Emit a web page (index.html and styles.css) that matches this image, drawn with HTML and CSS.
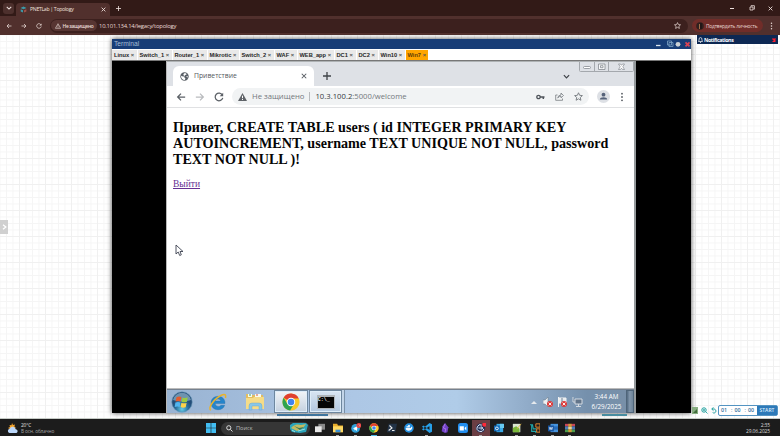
FILE: index.html
```html
<!DOCTYPE html>
<html lang="ru">
<head>
<meta charset="utf-8">
<title>PNETLab | Topology</title>
<link rel="stylesheet" href="styles.css">
</head>
<body>
<svg class="defs" width="0" height="0">
  <symbol id="back" viewBox="0 0 12 12"><path d="M11 6H2M6 2L2 6l4 4" fill="none" stroke="currentColor" stroke-width="1.5"/></symbol>
  <symbol id="reload" viewBox="0 0 12 12"><path d="M10 3.6A4.6 4.6 0 1 0 10.5 7" fill="none" stroke="currentColor" stroke-width="1.5"/><path d="M11 .8V5H6.8z" fill="currentColor"/></symbol>
  <symbol id="close" viewBox="0 0 8 8"><path d="M1 1l6 6M7 1L1 7" fill="none" stroke="currentColor" stroke-width="1.4"/></symbol>
  <symbol id="plus" viewBox="0 0 8 8"><path d="M4 0v8M0 4h8" fill="none" stroke="currentColor" stroke-width="1.3"/></symbol>
  <symbol id="down" viewBox="0 0 8 8"><path d="M1 2.5l3 3 3-3" fill="none" stroke="currentColor" stroke-width="1.4"/></symbol>
  <symbol id="star" viewBox="0 0 12 12"><path d="M6 1l1.5 3.4 3.7.4-2.8 2.5.8 3.7L6 9.1 2.8 11l.8-3.7L.8 4.8l3.7-.4z" fill="none" stroke="currentColor" stroke-width="1.2"/></symbol>
  <symbol id="dots" viewBox="0 0 4 12"><circle cx="2" cy="2" r="1.1" fill="currentColor"/><circle cx="2" cy="6" r="1.1" fill="currentColor"/><circle cx="2" cy="10" r="1.1" fill="currentColor"/></symbol>
  <symbol id="chrome" viewBox="0 0 20 20"><circle cx="10" cy="10" r="9.5" fill="#f8c829"/><path d="M10 10L1.8 5.3A9.5 9.5 0 0 1 18.500 6H10z" fill="#e0402f"/><path d="M1.8 5.3A9.500 9.500 0 0 0 9 19.500l4.300-7.200L10 10 6 12z" fill="#2fa350"/><circle cx="10" cy="10" r="4.700" fill="#fff"/><circle cx="10" cy="10" r="3.600" fill="#4284ec"/></symbol>
  <symbol id="bad" viewBox="0 0 6 6"><circle cx="3" cy="3" r="3" fill="#dc3b3b"/><path d="M1.6 1.6l2.8 2.8M4.4 1.6L1.6 4.4" stroke="#fff" stroke-width=".9"/></symbol>
</svg>

<header class="host-tabs">
  <span class="tab-search"><svg width="6" height="6"><use href="#down"/></svg></span>
  <div class="host-tab">
    <svg class="favicon" width="7" height="7" viewBox="0 0 7 7"><path d="M.5 2L3.5.5l3 1.500-3 1.300zM.7 3.200l2.300 1v2.400L.7 5.400z" fill="#3c9aaa"/><path d="M4 4.200l2.400-1v2.200L4 6.600z" fill="#9f5148"/></svg>
    <span class="host-title">PNETLab | Topology</span>
    <svg width="5" height="5"><use href="#close"/></svg>
  </div>
  <svg class="new-tab" width="5" height="5"><use href="#plus"/></svg>
  <div class="win-controls">
    <svg width="6" height="6" viewBox="0 0 6 6"><path d="M1 3.500h4" stroke="currentColor"/></svg>
    <svg width="6" height="6" viewBox="0 0 6 6"><path d="M1 2h3v3H1zM2 1.500V.7h3.400v3.500H4.500" fill="none" stroke="currentColor" stroke-width=".8"/></svg>
    <svg width="5" height="5"><use href="#close"/></svg>
  </div>
</header>
<div class="host-bar">
  <svg width="6" height="6"><use href="#back"/></svg>
  <svg class="flip" width="6" height="6"><use href="#back"/></svg>
  <svg width="6" height="6"><use href="#reload"/></svg>
  <div class="host-address">
    <span class="insecure"><svg width="6" height="6" viewBox="0 0 6 6"><path d="M3 .7L5.600 5.300H.4zM3 2.200v1.500M3 4.200v.6" fill="none" stroke="currentColor" stroke-width=".6"/></svg>Не защищено</span>
    <span class="host-url">10.101.134.14/legacy/topology</span>
    <svg class="fav" width="7" height="7"><use href="#star"/></svg>
  </div>
  <div class="identity"><svg width="8" height="8" viewBox="0 0 8 8"><circle cx="4" cy="4" r="3.800" fill="#31201e"/><path d="M3 2h2v5H3z" fill="#a36d48"/><path d="M4 1h2v6H4z" fill="#221717"/></svg><span>Подтвердить личность</span></div>
  <svg class="host-menu" width="3" height="8"><use href="#dots"/></svg>
</div>

<main class="lab">
  <button class="drawer"><svg width="5" height="6" viewBox="0 0 5 6"><path d="M1 .8L3.800 3 1 5.200" fill="none" stroke="#fff" stroke-width="1.300"/></svg></button>
  <aside class="notifications">
    <svg width="5" height="6" viewBox="0 0 5 6"><path d="M.5 4.500L1.100 3V2a1.400 1.400 0 0 1 2.800 0v1l.6 1.500zM2 5.500h1" fill="none" stroke="#fff" stroke-width=".7"/></svg>
    <b>Notifications</b><svg class="notif-close" width="4" height="4" viewBox="0 0 4 4"><path d="M.5.5l3 3M3.500.5l-3 3" stroke="currentColor" stroke-width="1.500"/></svg>
  </aside>

  <section class="terminal">
    <div class="term-title"><span>Terminal</span>
      <div class="term-controls">
        <svg width="35" height="8" viewBox="0 0 35 8"><path d="M0 5.500h4.500" stroke="#dce6ee" stroke-width="1.300"/><path d="M11.500 1h4v4h-4zM13 2.500h4v4h-4z" fill="none" stroke="#7da3c4" stroke-width=".8"/><circle cx="22" cy="4.300" r="2.400" fill="#cbd1d5"/><path d="M29.500 2.300l4 4M33.500 2.300l-4 4" stroke="#d84455" stroke-width="1.700"/></svg>
      </div>
    </div>
    <nav class="term-tabs">
      <span class="w1">Linux <i>×</i></span><span class="w2">Switch_1 <i>×</i></span><span class="w3">Router_1 <i>×</i></span><span class="w4">Mikrotic <i>×</i></span><span class="w5">Switch_2 <i>×</i></span><span class="w6">WAF <i>×</i></span><span class="w7">WEB_app <i>×</i></span><span class="w8">DC1 <i>×</i></span><span class="w9">DC2 <i>×</i></span><span class="w10">Win10 <i>×</i></span><span class="w11 active">Win7 <i>×</i></span>
    </nav>
    <div class="term-body">
      <div class="vm">
        <div class="vm-tabs">
          <div class="vm-tab">
            <svg width="9" height="9" viewBox="0 0 9 9"><circle cx="4.500" cy="4.500" r="4.200" fill="#5a6067"/><path d="M1 3.700l2 .9 1.500 0v1.200l1 .7-.8 1.500C2.600 7.800.9 6.200 1 3.700zM4 1.200l2 .1.600 1.100-1.400.7L4.600 4 3.300 3.100zM6 4.600l1.800-.5-.2 1.500z" fill="#fff"/></svg>
            <span>Приветствие</span>
            <svg class="vm-close" width="6" height="6"><use href="#close"/></svg>
          </div>
          <svg class="vm-new" width="8" height="8"><use href="#plus"/></svg>
          <svg class="vm-down" width="7" height="7"><use href="#down"/></svg>
          <div class="aero">
            <svg width="55" height="10" viewBox="0 0 55 10"><path d="M.5 0v8.500q0 1 1 1h52q1 0 1-1V0M15.500 0v9.500M29.500 0v9.500" fill="none" stroke="#a4a8ad" stroke-width="1"/><rect x="4.500" y="4.500" width="7" height="2" rx="1" fill="#fff" stroke="#858a90" stroke-width=".8"/><path d="M19.500 2h6.500v5.500h-6.500zM21.500 3.700h2.500v2h-2.500z" fill="#f7f8f9" stroke="#858a90" stroke-width=".8"/><path d="M39.500 2h2l1 1.300 1-1.300h2l-1.700 2.700L45.500 7.500h-2l-1-1.300-1 1.300h-2l1.700-2.800z" fill="#fff" stroke="#858a90" stroke-width=".7"/></svg>
          </div>
        </div>
        <div class="vm-bar">
          <svg width="10" height="10"><use href="#back"/></svg>
          <svg class="flip dim" width="10" height="10"><use href="#back"/></svg>
          <svg width="10" height="10"><use href="#reload"/></svg>
          <div class="omnibox">
            <svg width="9" height="8" viewBox="0 0 9 8"><path d="M4.500 0L9 8H0z" fill="#5f6368"/><path d="M4.500 2.700v2.500M4.500 6v1" stroke="#fff"/></svg>
            <span class="state">Не защищено</span><span class="sep"></span>
            <span class="vm-url"><b>10.3.100.2</b>:5000/welcome</span>
            <div class="omni-icons">
              <svg width="9" height="6" viewBox="0 0 9 6"><circle cx="2.500" cy="3" r="1.700" fill="none" stroke="#4f545a" stroke-width="1.300"/><path d="M4 3h4.500M7.300 3v2" stroke="#4f545a" stroke-width="1.500"/></svg>
              <svg width="9" height="9" viewBox="0 0 9 9"><path d="M2.500 3H.7v5.300h6.800V6.500M2.700 6q.5-3 3.300-3V1l2.500 2.500L6 5.800V4.200Q4 4.200 2.700 6z" fill="none" stroke="#777c82" stroke-width=".8"/></svg>
              <svg width="9" height="9"><use href="#star"/></svg>
            </div>
          </div>
          <svg class="profile" width="13" height="13" viewBox="0 0 13 13"><circle cx="6.500" cy="6.500" r="6.500" fill="#dde0e5"/><circle cx="6.500" cy="4.700" r="1.900" fill="#56637a"/><path d="M2.800 9.500c0-3 7.400-3 7.400 0z" fill="#56637a"/></svg>
          <svg class="vm-menu" width="4" height="10"><use href="#dots"/></svg>
        </div>
        <article class="page">
          <h1><span>Привет, CREATE TABLE users ( id INTEGER PRIMARY KEY</span><br><span>AUTOINCREMENT, username TEXT UNIQUE NOT NULL, password</span><br><span>TEXT NOT NULL )!</span></h1>
          <a href="#">Выйти</a>
          <svg class="cursor" width="9" height="13" viewBox="0 0 9 13"><path d="M1 1v9l2.200-2 1.500 3.500 1.600-.7L5 7.500h3z" fill="#fff" stroke="#3c4250" stroke-width=".9"/></svg>
        </article>
        <footer class="aero-bar">
          <svg class="orb" width="22" height="22" viewBox="0 0 22 22"><defs><radialGradient id="orbg" cy=".85"><stop stop-color="#64cce8"/><stop offset=".6" stop-color="#2a6f9c"/><stop offset="1" stop-color="#234d78"/></radialGradient></defs><circle cx="11" cy="11" r="10.300" fill="url(#orbg)" stroke="#719dbd" stroke-width=".6"/><path d="M2 9a9.200 9.200 0 0 1 18 0q-9 3-18 0" fill="#b9d9e6" opacity=".5"/><path d="M5.500 6.300q2.600-1.500 4.900-.2L9.600 10.500Q7.300 9.500 4.600 10.500z" fill="#e45b2e"/><path d="M11.400 6.500q2.200 1 5.300.1l-.9 4.300q-2.700.9-5.200 0z" fill="#9aca42"/><path d="M4.400 11.500q2.600-1 5.100 0L8.700 16q-2.400-1-5 0z" fill="#52b5ef"/><path d="M10.400 11.700q2.400 1.200 5.200.2l-.9 4.400q-2.700.8-5.100-.2z" fill="#ffd249"/></svg>
          <svg class="ie" width="20" height="20" viewBox="0 0 20 20"><path d="M17 11.500H7.200q.4 3 3.100 3 1.900 0 2.600-1.200h3.800Q15.200 17.700 10 17.700C5.800 17.700 3 14.900 3 11S6 4.300 10 4.300s7.200 2.700 7 7.200zM7.200 9h5.600Q12.500 7 10 7T7.200 9" fill="#2585cb" fill-rule="evenodd" stroke="#1a649d" stroke-width=".3"/><path d="M3 18C-1 17 6 6 14.500 2.700q4-1.300 3 3.300" fill="none" stroke="#e8b32d" stroke-width="1.500"/></svg>
          <svg class="explorer" width="20" height="18" viewBox="0 0 20 18"><path d="M1 3V1h5l1 1h11v14H1z" fill="#e2bd60"/><path d="M3 1h4v3H3zM10 1h6v4h-6z" fill="#f6faf0"/><path d="M4 2h2" stroke="#32a765"/><path d="M11 2h2" stroke="#d25745"/><path d="M1 5h7l1-1h10v12H1z" fill="#f5dc88"/><path d="M4 17v-4q0-3 3-3h7q3 0 3 3v4h-3v-4H7v4z" fill="#88c7e8" stroke="#609fc9" stroke-width=".4"/></svg>
          <div class="task chrome-task"><svg width="18" height="18"><use href="#chrome"/></svg></div>
          <div class="task cmd-task"><div class="cmd">C:\_</div></div>
          <span class="stack"></span>
          <div class="tray">
            <svg class="tray-up" width="6" height="4" viewBox="0 0 6 4"><path d="M0 4l3-3 3 3z" fill="#e5e9ed"/></svg>
            <svg width="10" height="12" viewBox="0 0 10 12"><path d="M0 4h2l3-3v10L2 8H0z" fill="#edf0f2" stroke="#657484" stroke-width=".5"/><use href="#bad" x="4" y="5" width="6" height="6"/></svg>
            <svg width="11" height="12" viewBox="0 0 11 12"><path d="M1.500 1v10M2 2h7v5H2z" fill="#e7ebee" stroke="#f2f2f2"/><path d="M5 2v5" stroke="#6e8298"/><use href="#bad" x="4" y="5" width="6" height="6"/></svg>
            <svg width="11" height="12" viewBox="0 0 11 12"><path d="M3 3h7v5H3zM6.500 8v2M4 10.500h5M1 1v5h2" fill="#62758a" stroke="#d3dae2"/></svg>
          </div>
          <div class="vm-clock">3:44 AM<br>6/29/2025</div>
          <div class="peek"></div>
        </footer>
      </div>
    </div>
  </section>
  <span class="sliver left"></span><span class="sliver right"></span>

  <div class="timer">
    <svg width="6" height="7" viewBox="0 0 6 7"><path d="M0 0h6v7H0z" fill="#88ae82"/><path d="M1 6h4V2z" fill="#426d3c"/></svg>
    <svg width="7" height="7" viewBox="0 0 7 7"><circle cx="3" cy="3" r="2.200" fill="none" stroke="#20a09e"/><path d="M4.500 4.500l2 2M2 3h2M3 2v2" stroke="#20a09e" stroke-width=".9"/></svg>
    <svg width="6" height="7" viewBox="0 0 6 7"><path d="M1 2h2a2 2 0 1 1-1.300 3.600M2.500.4L.7 2l1.800 1.700" fill="none" stroke="#20a09e"/></svg>
    <div class="timebox"><span>01</span><em>:</em><span>00</span><em>:</em><span>00</span><b>START</b></div>
  </div>
</main>

<footer class="taskbar">
  <svg class="weather" width="12" height="11" viewBox="0 0 12 11"><path d="M5 0l1 2 2-.4-.6 2L9 5 5 7 1 5l2-1-.5-2 2 .3z" fill="#f5a52e"/><path d="M2.500 10a2.200 2.200 0 0 1 .2-4.300 3.200 3.200 0 0 1 6 .5A2 2 0 0 1 9.500 10z" fill="#bcd8fb"/></svg>
  <div class="forecast">20°C<br><span>В осн. облачно</span></div>
  <svg class="start" width="10" height="10" viewBox="0 0 10 10"><path d="M0 0h4.700v4.700H0zM5.300 0H10v4.700H5.300zM0 5.300h4.700V10H0zM5.300 5.300H10V10H5.300z" fill="#42bdf2"/></svg>
  <div class="search"><svg width="7" height="7" viewBox="0 0 7 7"><circle cx="2.800" cy="2.800" r="2.100" fill="none" stroke="#ddd"/><path d="M4.500 4.500l2 2" stroke="#ddd"/></svg><span>Поиск</span>
    <svg class="art" width="19" height="10" viewBox="0 0 19 10"><path d="M1 2l3-2h13l2 2-2 7-6 1-8-1-2-3z" fill="#2ba4ba"/><path d="M2 5q4-5 10-3l5-1-3 4-6 3z" fill="#c1ba62"/><path d="M5 3l5 2 5-1-4 3z" fill="#347757"/><path d="M9 8l7-2M3 7l3 2" stroke="#9ce3df"/></svg>
  </div>
  <div class="apps">
    <span><svg viewBox="0 0 12 12"><path d="M4 1h8v7H4z" fill="#898989"/><path d="M0 4h8v7H0z" fill="#e7e7e7"/></svg></span>
    <span class="run"><svg viewBox="0 0 12 12"><path d="M0 1h5l1 2h6v8H0z" fill="#e9ad2b"/><path d="M0 4h12v7H0z" fill="#ffd862"/><path d="M3 8h6v3H3z" fill="#3990d5"/></svg></span>
    <span class="run"><svg viewBox="0 0 12 12"><circle cx="5.500" cy="6.500" r="5.200" fill="#30a3dc"/><path d="M2 6.500l6-3-1 6-2-1.500-1 1V7z" fill="#fff"/><circle cx="9.500" cy="3" r="3" fill="#e64242"/><path d="M8.500 2l1 0v2M10.500 2v2" stroke="#ffd0d0" stroke-width=".5"/></svg></span>
    <span class="run blue-run"><svg viewBox="0 0 12 12"><use href="#chrome" width="12" height="12"/></svg></span>
    <span><svg viewBox="0 0 12 12"><path d="M2 1h10l-2 10H0z" fill="#223246"/><path d="M3 3l3 3-4 3M6 9h3" fill="none" stroke="#eee" stroke-width="1.300"/></svg></span>
    <span><svg viewBox="0 0 12 12"><circle cx="6" cy="6" r="5.700" fill="#238fe0"/><path d="M2 6h6l1-1.700 1 1.200Q9 9.500 5 9.300 2 9 2 6zM3 4h4v1.500H3zM5 2.500h2V4H5z" fill="#f2f8ff"/></svg></span>
    <span class="run"><svg viewBox="0 0 12 12"><path d="M9 0l3 1.500v9L9 12 0 4.500 1.500 3 9 8.500zM9 0L0 7.500 1.500 9 9 3.500z" fill="#27a0e9"/></svg></span>
    <span><svg viewBox="0 0 12 12"><path d="M6 0l4 5-1 6-3 1-4-2 1-6z" fill="#7241c7"/><path d="M6 1L4 6l3 1-1 4" fill="none" stroke="#b080ed"/></svg></span>
    <span><svg viewBox="0 0 12 12"><rect width="12" height="12" rx="3" fill="#238ff0"/><path d="M2 4h5v5H2zM8 6l2-2v5L8 7z" fill="#fff"/></svg></span>
    <span class="selected run"><svg viewBox="0 0 12 12"><circle cx="5.500" cy="6" r="5.500" fill="#202d53"/><path d="M7 2.500A4 4 0 1 0 9.200 7M3 6h5M6 4l2 2-2 2" fill="none" stroke="#e7efff" stroke-width="1.200"/><circle cx="10" cy="2" r="2.500" fill="#ff2937"/></svg></span>
    <span><svg viewBox="0 0 12 12"><path d="M3 1h8v10H3z" fill="#39a9e7"/><path d="M7 1h5v5H7z" fill="#67c9f0"/><path d="M0 3h7v7H0z" fill="#126bb8"/><circle cx="3.500" cy="6.500" r="1.700" fill="none" stroke="#fff"/></svg></span>
    <span class="run"><svg viewBox="0 0 12 12"><path d="M1 1h9v10H1z" fill="#d9e5d0"/><path d="M1 6l4-2 4 3v4H1z" fill="#7ab839"/><path d="M6 7l5-6" stroke="#e4b645"/></svg></span>
    <span class="run"><svg viewBox="0 0 12 12"><path d="M0 2h3l1 5h4M2 2v8h5v2" fill="none" stroke="#1fa6a9" stroke-width="1.300"/><path d="M7 1h5v4H7zM8 7h4v4H8z" fill="none" stroke="#dc812d" stroke-width="1.200"/></svg></span>
    <span class="run"><svg viewBox="0 0 12 12"><path d="M3 1h9v10H3z" fill="#4693dd"/><path d="M3 4h9v4H3z" fill="#286dba"/><path d="M0 3h7v7H0z" fill="#1756a3"/><path d="M1.500 5l1 3 1-3 1 3 1-3" fill="none" stroke="#fff" stroke-width=".8"/></svg></span>
    <span class="run"><svg viewBox="0 0 12 12"><path d="M0 1h12v3H0z" fill="#c94557"/><path d="M0 4h12v4H0z" fill="#4f79b5"/><path d="M0 8h12v3H0z" fill="#4b9b4b"/><path d="M4 1h4v10H4z" fill="#d19a37"/><path d="M4 5h4v2H4z" fill="#e4e0b5"/></svg></span>
  </div>
  <div class="clock">2:35<br>29.06.2025</div>
</footer>
</body>
</html>
```
FILE: styles.css
```css
* { box-sizing: border-box; }
body { margin: 0; width: 780px; height: 436px; overflow: hidden; display: flex; flex-direction: column; font-family: "Open Sans", "Noto Sans", sans-serif; background: #fff; }
svg { display: block; flex: none; }
.defs { position: absolute; }
.flip { transform: scaleX(-1); }
.host-tabs { height: 16px; flex: none; background: #321a17; color: #eee0dd; display: flex; align-items: center; padding-left: 3px; }
.tab-search { width: 11px; height: 11px; border-radius: 3px; background: #4d302d; display: grid; place-items: center; }
.host-tab { width: 94px; height: 13px; margin: 3px 0 0 2px; padding: 0 4px; background: #51302d; border-radius: 4px 4px 0 0; display: flex; align-items: center; }
.host-title { margin: -2px auto 0 3px; font-size: 5.2px; letter-spacing: -.32px; line-height: 8px; white-space: nowrap; }
.new-tab { margin-left: 6px; }
.win-controls { margin-left: auto; width: 44px; margin-right: 7px; display: flex; justify-content: space-between; align-items: center; }
.host-bar { height: 19px; flex: none; background: #51302d; color: #eadbd7; display: flex; align-items: center; padding-left: 6px; gap: 9px; }
.host-address { width: 638px; height: 14px; margin-left: -1px; border-radius: 7px; background: #3c201e; display: flex; align-items: center; padding: 0 7px 0 1px; }
.insecure { width: 46px; height: 11px; border-radius: 6px; background: #573532; display: flex; align-items: center; justify-content: center; gap: 2px; font-size: 4.9px; letter-spacing: -.35px; line-height: 8px; font-weight: 600; white-space: nowrap; }
.host-url { font-size: 5.9px; letter-spacing: -.22px; line-height: 9px; margin-left: 2px; padding-top: 1px; white-space: nowrap; }
.fav { margin-left: auto; }
.identity { margin-left: -5px; width: 71px; height: 13px; background: #702d29; border-radius: 7px; display: flex; align-items: center; gap: 2px; padding-left: 4px; font-size: 4.8px; letter-spacing: -.13px; line-height: 8px; white-space: nowrap; }
.host-menu { margin-left: -2px; }
.lab { height: 384px; flex: none; position: relative; background-color: #fff; background-image: linear-gradient(90deg, #f0f0f0 1px, transparent 1px), linear-gradient(#f0f0f0 1px, transparent 1px), linear-gradient(90deg, #f5f5f5 1px, transparent 1px), linear-gradient(#f5f5f5 1px, transparent 1px); background-size: 26px 26px, 26px 26px, 6.5px 6.5px, 6.5px 6.5px; background-position: 19px 0, 0 19px, 6px 0, 0 6px; border-bottom: 1px solid #c6cbc6; }
.drawer { position: absolute; left: 0; top: 185px; width: 8px; height: 14px; border: 0; padding: 0; background: #d0d0d0; display: grid; place-items: center; }
.notifications { position: absolute; left: 697px; top: 0; width: 81px; height: 9px; background: #0d2853; color: #fff; padding: 0 2px 0 1px; display: flex; align-items: center; gap: 1px; font-size: 5.3px; letter-spacing: -.38px; line-height: 8px; }
.notif-close { margin-left: auto; color: #ff1e2e; }
.terminal { position: absolute; left: 112px; top: 4px; width: 579px; height: 374px; background: #000; box-shadow: 0 0 5px #444; }
.term-title { height: 10px; background: #173d77; color: #a6bdd5; display: flex; align-items: center; font-size: 6.7px; line-height: 10px; padding-left: 2px; font-family: "Liberation Sans", sans-serif; }
.term-controls { margin-left: auto; }
.term-tabs { height: 12px; background: #fff; display: flex; padding: 1px 0 1px; border-bottom: 1px solid #777; font: bold 5.7px/9px "Liberation Sans", sans-serif; color: #262626; white-space: nowrap; }
.term-tabs span { height: 10px; line-height: 10px; background: #e9e9e9; padding-left: 2px; margin-right: 1px; }
.term-tabs i { font-style: normal; color: #555; }
.w1 { width: 24.5px; } .w2 { width: 34px; } .w3 { width: 34px; } .w4 { width: 31px; } .w5 { width: 34px; } .w6 { width: 22px; } .w7 { width: 36px; } .w8 { width: 21px; } .w9 { width: 21px; } .w10 { width: 26px; } .w11 { width: 22.5px; }
.term-tabs .active { background: #ffa500; color: #614007; }
.term-body { height: 352px; display: flex; padding-left: 54px; }
.vm { width: 470px; display: flex; flex-direction: column; background: #fff; border-left: 1px solid #b8b8b8; border-right: 2px solid #94999b; }
.vm-tabs { height: 25px; flex: none; background: #dee1e6; color: #3f4348; position: relative; display: flex; padding: 4px 0 0 6px; border-top: 1px solid #aeb2b4; }
.vm-tab { width: 141px; height: 20px; border-radius: 6px 6px 0 0; background: #fff; display: flex; align-items: center; padding: 0 7px 0 7px; font-size: 6.8px; line-height: 10px; color: #555a60; }
.vm-tab span { margin-left: 5px; }
.vm-close { margin-left: auto; }
.vm-new { margin: 6px 0 0 9px; }
.vm-down { margin: 7px 0 0 232px; }
.aero { position: absolute; right: 0; top: 0; }
.vm-bar { height: 22px; flex: none; border-bottom: 1px solid #e0e1e3; display: flex; align-items: center; padding-left: 9px; gap: 9px; color: #5a5f65; }
.dim { color: #b9bbbe; }
.omnibox { width: 357px; height: 17px; border-radius: 9px; background: #f1f3f4; display: flex; align-items: center; padding: 0 6px; margin-left: -1px; font-size: 7.7px; line-height: 11px; color: #73787d; white-space: nowrap; }
.state { margin-left: 5px; }
.sep { width: 1px; height: 9px; background: #b8babd; margin: 0 5px; }
.vm-url b { font-weight: 400; color: #34383d; }
.omni-icons { margin-left: auto; display: flex; align-items: center; gap: 10px; }
.profile { margin-left: -1px; }
.vm-menu { margin-left: 1px; }
.page { height: 281px; flex: none; position: relative; padding: 11px 0 0 6px; font-family: "Liberation Serif", serif; border-bottom: 1px solid #bbb; }
.page h1 { margin: 0; font-size: 14.12px; line-height: 16px; white-space: nowrap; color: #050505; }
.page a { display: inline-block; margin-top: 12px; font-size: 9.5px; line-height: 11px; color: #663092; }
.cursor { position: absolute; left: 8px; top: 136px; }
.aero-bar { height: 24px; flex: none; background: linear-gradient(90deg, #99b3d2, #adc7e5 40%, #b0cce8 62%, #91acc9 77%, #7590ac 90%, #7990a8); border-top: 1px solid #75818f; display: flex; align-items: center; padding-left: 4px; }
.ie { margin-left: 15px; }
.explorer { margin-left: 17px; }
.task { height: 23px; border: 1px solid #6e879f; box-shadow: inset 0 0 0 1px #ddecf8; background: linear-gradient(#f1f4f7, #c4d1df); display: grid; place-items: center; }
.chrome-task { width: 35px; margin-left: 9px; }
.cmd-task { width: 33px; margin-left: 1px; background: linear-gradient(#d8e5f2, #b2c7df); }
.stack { width: 3px; height: 23px; border-right: 1px solid #7890a8; background: #c3d5e8; }
.cmd { width: 18px; height: 14px; border: 1px solid #aeb4b9; border-top-width: 2px; background: #050505; color: #e8e8e8; font: bold 5px/6px "Liberation Mono", monospace; }
.tray { display: flex; align-items: center; gap: 4px; margin-left: 186px; }
.tray-up { margin-right: 2px; }
.vm-clock { width: 40px; margin-left: 4px; color: #fff; font-size: 6.3px; line-height: 10px; text-align: center; }
.peek { width: 8px; height: 23px; margin-left: auto; background: linear-gradient(90deg, #526980, #8297ac 45%, #6e8499); border: 1px solid #4f6579; }
.sliver { position: absolute; top: 379px; height: 2px; background: #3f759d; }
.left { left: 277px; width: 51px; }
.right { left: 602px; width: 25px; background: #488da0; }
.timer { position: absolute; left: 692px; top: 370px; display: flex; align-items: center; gap: 3px; }
.timebox { width: 60px; height: 11px; margin-left: -2px; border: 1px solid #5494c2; border-radius: 2px; display: flex; align-items: center; background: #fff; color: #346f9e; font-size: 5.3px; line-height: 9px; padding-left: 2px; }
.timebox span { width: 8px; font-weight: 600; }
.timebox em { width: 5.5px; text-align: center; font-style: normal; }
.timebox b { width: 20px; margin-left: auto; background: #2d79b8; color: #deefff; text-align: center; font-size: 5px; font-weight: 600; }
.taskbar { height: 17px; flex: none; background: #1c1c1c; color: #e3e3e3; display: flex; align-items: center; padding: 1px 10px 0 7px; }
.forecast { width: 183px; padding-left: 2px; font-size: 4.7px; letter-spacing: -.08px; line-height: 6.5px; }
.forecast span { color: #aaa; }
.start { margin-left: 3.5px; }
.search { width: 89px; height: 13px; margin-left: 5.5px; border-radius: 7px; background: #363636; display: flex; align-items: center; padding: 0 2px 0 5px; font-size: 5.6px; line-height: 8px; color: #bbb; }
.search span { margin-left: 3px; }
.art { margin-left: auto; }
.apps { display: flex; margin-left: 1px; }
.apps span { width: 17.9px; height: 16px; display: grid; place-items: center; position: relative; }
.apps svg { width: 10px; height: 10px; }
.run::after { content: ""; position: absolute; bottom: 0; left: 7px; width: 3px; height: 1px; background: #aaa; }
.blue-run::after { left: 6px; width: 6px; background: #4bb6e4; }
.apps .selected { background: #6b3e43; }
.clock { margin-left: auto; text-align: right; font-size: 4.9px; letter-spacing: -.1px; line-height: 6.5px; color: #ddd; }
```
